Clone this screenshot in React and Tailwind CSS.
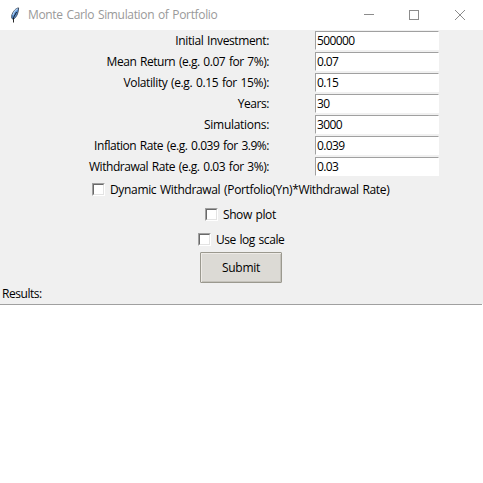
import React from "react";

const fields = [
  { label: "Initial Investment:", value: "500000", track: "tracking-[-0.38px]" },
  { label: "Mean Return (e.g. 0.07 for 7%):", value: "0.07", track: "tracking-[-0.46px]" },
  { label: "Volatility (e.g. 0.15 for 15%):", value: "0.15", track: "tracking-[-0.39px]" },
  { label: "Years:", value: "30", track: "tracking-[-0.45px]" },
  { label: "Simulations:", value: "3000", track: "tracking-[-0.3px]" },
  { label: "Inflation Rate (e.g. 0.039 for 3.9%:", value: "0.039", track: "tracking-[-0.47px]" },
  { label: "Withdrawal Rate (e.g. 0.03 for 3%):", value: "0.03", track: "tracking-[-0.45px]" },
];

function Field({ label, value, track }) {
  return (
    <div className="flex h-[21px] items-center">
      <div className={`w-[269px] text-right leading-[19px] ${track}`}>{label}</div>
      <div className="ml-[46px] h-[19px] w-[124px] border border-b-white border-l-[#a0a0a0] border-r-white border-t-[#a0a0a0] bg-white pl-px leading-[18px] tracking-[-0.62px]">
        {value}
      </div>
    </div>
  );
}

function Check({ label, className }) {
  return (
    <div className={`flex h-[25px] items-center ${className}`}>
      <div className="size-[13px] border border-b-white border-l-[#a0a0a0] border-r-white border-t-[#a0a0a0]">
        <div className="size-[11px] border border-b-[#e3e3e3] border-l-[#696969] border-r-[#e3e3e3] border-t-[#696969] bg-white" />
      </div>
      <div className="ml-[5px] leading-[19px]">{label}</div>
    </div>
  );
}

export default function App() {
  return (
    <div className="flex h-[483px] w-[483px] flex-col overflow-hidden whitespace-nowrap bg-white font-['Open_Sans','Noto_Sans',sans-serif] text-[12px] text-black [word-spacing:1px]">
      <div className="flex h-[30px] shrink-0 items-center text-[#999999]">
        <svg className="ml-[9px] h-[16px] w-[12px]" viewBox="0 0 12 16">
          <path d="M9.6.9C6.8 1.2 4 4.2 2.7 8.5L2.8 11.3 4 12.2C7 11 9.3 7 9.6.9Z" fill="#5b93d8" stroke="#2a3442" strokeWidth="0.8" />
          <path d="M8.6 1.8C6.5 3 4.7 5.2 3.9 8" fill="none" stroke="#b5d5f5" strokeWidth="1.2" />
          <path d="M7.6 5L4.5 10.5V15.5" fill="none" stroke="#111" strokeWidth="0.9" />
        </svg>
        <div className="ml-[7px] w-[200px] leading-[18px] tracking-[-0.34px]">Monte Carlo Simulation of Portfolio</div>
        <svg className="ml-[136px] h-[12px] w-[102px]" viewBox="0 0 102 12" fill="none" stroke="#8c8c8c" shapeRendering="crispEdges">
          <path d="M0 5.5H10" />
          <path d="M45.5 1.5H54.5V10.5H45.5Z" />
          <path d="M91 1L101 11M101 1L91 11" shapeRendering="auto" />
        </svg>
      </div>

      <div className="h-[274px] w-[483px] shrink-0 bg-[#f0f0f0]">
        <div className="flex flex-col">
          {fields.map((f) => (
            <Field key={f.label} {...f} />
          ))}
        </div>
        <Check className="pl-[92px] tracking-[-0.34px]" label="Dynamic Withdrawal (Portfolio(Yn)*Withdrawal Rate)" />
        <Check className="pl-[205px] tracking-[-0.41px]" label="Show plot" />
        <Check className="pl-[198px] tracking-[-0.45px]" label="Use log scale" />
        <div className="ml-[200px] flex h-[31px] w-[82px] items-center justify-center rounded-[1px] border border-[#9b998f] bg-[#dcdad5] tracking-[-0.25px] shadow-[inset_1px_1px_0_#eeebe7,inset_-1px_-1px_0_#c5c3bc]">
          Submit
        </div>
        <div className="ml-[2px] flex h-[21px] items-center tracking-[-0.45px]">Results:</div>
      </div>
      <div className="h-px w-[482px] shrink-0 bg-[#a0a0a0]" />
    </div>
  );
}
